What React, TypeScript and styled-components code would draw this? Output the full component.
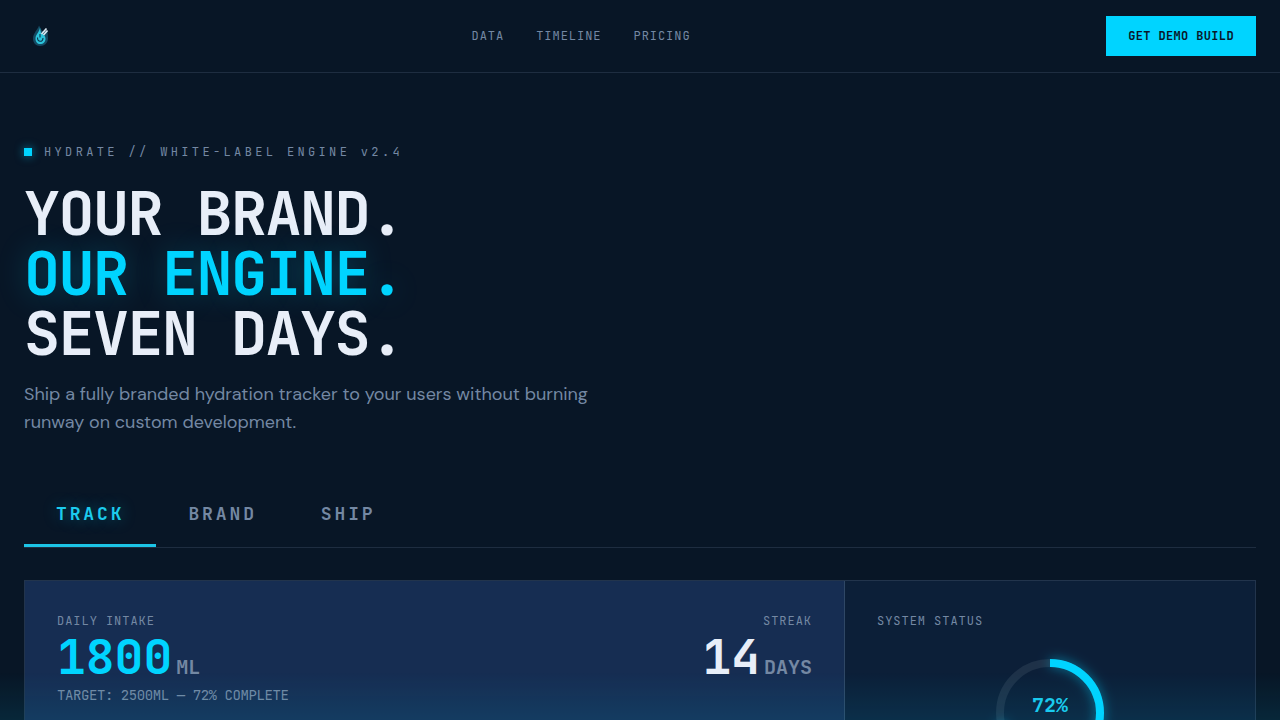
import React from "react";
import styled, { createGlobalStyle, css } from "styled-components";

const mono = `"JetBrains Mono", "DejaVu Sans Mono", "Liberation Mono", monospace`;
const sans = `"DM Sans", "Inter", "Open Sans", sans-serif`;
const cyan = "#00d4ff";
const ink = "#0a1628";
const muted = "#7488a3";
const text = "#e8eef8";
const line = "#1e2d40";

const Global = createGlobalStyle`
  *, *::before, *::after { box-sizing: border-box; }
  body {
    margin: 0;
    background: #081626;
    color: ${text};
    font-family: ${mono};
  }
  h1, h2, p { margin: 0; }
`;

const Page = styled.div`
  min-height: 100vh;
`;

const Header = styled.header`
  display: flex;
  align-items: center;
  justify-content: space-between;
  padding: 16px 24px;
  border-bottom: 1px solid ${line};
`;

const LogoLink = styled.a`
  display: flex;
  width: 32px;
  height: 32px;
`;

const Nav = styled.nav`
  display: flex;
  gap: 32px;
`;

const NavLink = styled.a`
  color: ${muted};
  font-size: 12px;
  line-height: 16px;
  letter-spacing: 0.08em;
  text-decoration: none;
`;

const DemoButton = styled.button`
  height: 40px;
  padding: 0 22px;
  border: 0;
  background: ${cyan};
  color: ${ink};
  font: 700 12px/16px ${mono};
  letter-spacing: 0.03em;
  cursor: pointer;
`;

const Main = styled.main`
  padding: 71px 24px 64px;
`;

const Eyebrow = styled.p`
  display: flex;
  align-items: center;
  gap: 12px;
  color: ${muted};
  font-size: 12px;
  line-height: 16px;
  letter-spacing: 0.28em;
  white-space: pre;
`;

const Dot = styled.span`
  width: 8px;
  height: 8px;
  background: ${cyan};
  box-shadow: 0 0 10px rgba(0, 212, 255, 0.6);
`;

const Headline = styled.h1`
  margin-top: 24px;
  font-size: 60px;
  line-height: 60px;
  font-weight: 700;
  letter-spacing: -0.025em;
`;

const HeadlineRow = styled.span<{ $glow?: boolean }>`
  display: block;
  ${(p) =>
    p.$glow &&
    css`
      color: ${cyan};
      text-shadow: 0 0 30px rgba(0, 212, 255, 0.25);
    `}
`;

const Lead = styled.p`
  max-width: 576px;
  margin-top: 16px;
  color: ${muted};
  font-family: ${sans};
  font-size: 18px;
  font-optical-sizing: none;
  line-height: 28px;
`;

const Tabs = styled.div`
  display: flex;
  margin-top: 44px;
  border-bottom: 1px solid ${line};
`;

const Tab = styled.button<{ $active?: boolean }>`
  height: 67px;
  padding: 3px 32px 0;
  border: 0;
  border-bottom: 3px solid ${(p) => (p.$active ? "#1cc4e6" : "transparent")};
  background: none;
  color: ${(p) => (p.$active ? "#1ccbee" : muted)};
  font: 700 18px/24px ${mono};
  letter-spacing: 0.16em;
  text-shadow: ${(p) => (p.$active ? "0 0 16px rgba(0, 212, 255, 0.4)" : "none")};
  cursor: pointer;
`;

const Board = styled.section`
  display: grid;
  grid-template-columns: 2fr 1fr;
  margin-top: 32px;
  border: 1px solid #22344c;
`;

const IntakePanel = styled.div`
  display: flex;
  justify-content: space-between;
  align-items: flex-start;
  padding: 32px;
  border-right: 1px solid #2f4765;
  background: #162d52;
`;

const StatusPanel = styled.div`
  padding: 32px;
  background: #0c1f38;
`;

const Metric = styled.div<{ $end?: boolean }>`
  display: flex;
  flex-direction: column;
  align-items: ${(p) => (p.$end ? "flex-end" : "flex-start")};
  gap: 4px;
`;

const Label = styled.h2`
  color: ${muted};
  font-size: 12px;
  line-height: 16px;
  font-weight: 400;
  letter-spacing: 0.08em;
`;

const Value = styled.p<{ $accent?: boolean }>`
  display: flex;
  align-items: baseline;
  gap: 4px;
  color: ${(p) => (p.$accent ? cyan : text)};
  font-size: 48px;
  line-height: 48px;
  font-weight: 700;
`;

const Unit = styled.span`
  color: ${muted};
  font-size: 20px;
  line-height: 20px;
`;

const Target = styled.p`
  padding-top: 2px;
  color: ${muted};
  font-size: 14px;
  line-height: 16px;
  letter-spacing: -0.03em;
`;

const Gauge = styled.div`
  display: grid;
  place-items: center;
  margin-top: 24px;

  > * {
    grid-area: 1 / 1;
  }
`;

const GaugeDrawing = styled.svg`
  overflow: visible;
`;

const GaugeArc = styled.circle`
  filter: drop-shadow(0 0 6px rgba(0, 212, 255, 0.5));
`;

const GaugeText = styled.span`
  padding-bottom: 16px;
  color: #1ccbee;
  font-size: 20px;
  line-height: 24px;
  font-weight: 700;
`;

const BottomGlow = styled.div`
  position: fixed;
  inset: auto 0 0;
  height: 48px;
  background: linear-gradient(to top, rgba(0, 212, 255, 0.09), transparent);
  pointer-events: none;
`;

const Logo = () => (
  <svg viewBox="0 0 32 32" width="32" height="32" aria-hidden="true">
    <path
      d="M15 5.500 C13.500 10 9 13.500 9 18.500 C9 23 12 26 16 26 C20.500 26 24 23 24 18.500 L23.500 11 L18 11 Z"
      fill="#154a62"
    />
    <path
      d="M16 7.500 C15.500 12 11.500 14.500 11.500 18.500 C11.500 22 13.500 24 16 24 C19.500 24 21.500 22 21.500 18.500 C21.500 16.500 20 15.500 19.500 14 L17.500 14 C16.500 12 16.500 10 16 7.500 Z"
      fill="#2cc4dc"
    />
    <path d="M13.500 17.500 C13.500 22.500 19 22.500 19 18 M16 14 L16 17.500" fill="none" stroke="#0b3048" strokeWidth="1.100" />
    <path d="M17.500 14 L22.500 8.500 M19.500 15 L23.500 10.500" stroke="#dbe9f2" strokeWidth="1.700" />
  </svg>
);

const radius = 50;
const circumference = 2 * Math.PI * radius;

const Ring = ({ value }: { value: number }) => (
  <Gauge>
    <GaugeDrawing viewBox="0 0 120 120" width="120" height="120" aria-hidden="true">
      <circle cx="60" cy="60" r={radius} fill="none" stroke="#1e3148" strokeWidth="8" />
      <GaugeArc
        cx="60"
        cy="60"
        r={radius}
        fill="none"
        stroke={cyan}
        strokeWidth="8"
        strokeDasharray={`${(circumference * value) / 100} ${circumference}`}
        transform="rotate(-90 60 60)"
      />
    </GaugeDrawing>
    <GaugeText>{value}%</GaugeText>
  </Gauge>
);

export default function App() {
  const [tab, setTab] = React.useState("TRACK");
  return (
    <Page>
      <Global />
      <Header>
        <LogoLink href="#" aria-label="Hydrate">
          <Logo />
        </LogoLink>
        <Nav>
          <NavLink href="#data">DATA</NavLink>
          <NavLink href="#timeline">TIMELINE</NavLink>
          <NavLink href="#pricing">PRICING</NavLink>
        </Nav>
        <DemoButton type="button">GET DEMO BUILD</DemoButton>
      </Header>
      <Main>
        <Eyebrow>
          <Dot />
          HYDRATE // WHITE-LABEL ENGINE v2.4
        </Eyebrow>
        <Headline>
          <HeadlineRow>YOUR BRAND.</HeadlineRow>
          <HeadlineRow $glow>OUR ENGINE.</HeadlineRow>
          <HeadlineRow>SEVEN DAYS.</HeadlineRow>
        </Headline>
        <Lead>
          Ship a fully branded hydration tracker to your users without burning runway on custom
          development.
        </Lead>
        <Tabs role="tablist">
          {["TRACK", "BRAND", "SHIP"].map((name) => (
            <Tab
              key={name}
              type="button"
              role="tab"
              aria-selected={tab === name}
              $active={tab === name}
              onClick={() => setTab(name)}
            >
              {name}
            </Tab>
          ))}
        </Tabs>
        <Board>
          <IntakePanel>
            <Metric>
              <Label>DAILY INTAKE</Label>
              <Value $accent>
                1800<Unit>ML</Unit>
              </Value>
              <Target>TARGET: 2500ML — 72% COMPLETE</Target>
            </Metric>
            <Metric $end>
              <Label>STREAK</Label>
              <Value>
                14<Unit>DAYS</Unit>
              </Value>
            </Metric>
          </IntakePanel>
          <StatusPanel>
            <Label>SYSTEM STATUS</Label>
            <Ring value={72} />
          </StatusPanel>
        </Board>
      </Main>
      <BottomGlow />
    </Page>
  );
}
